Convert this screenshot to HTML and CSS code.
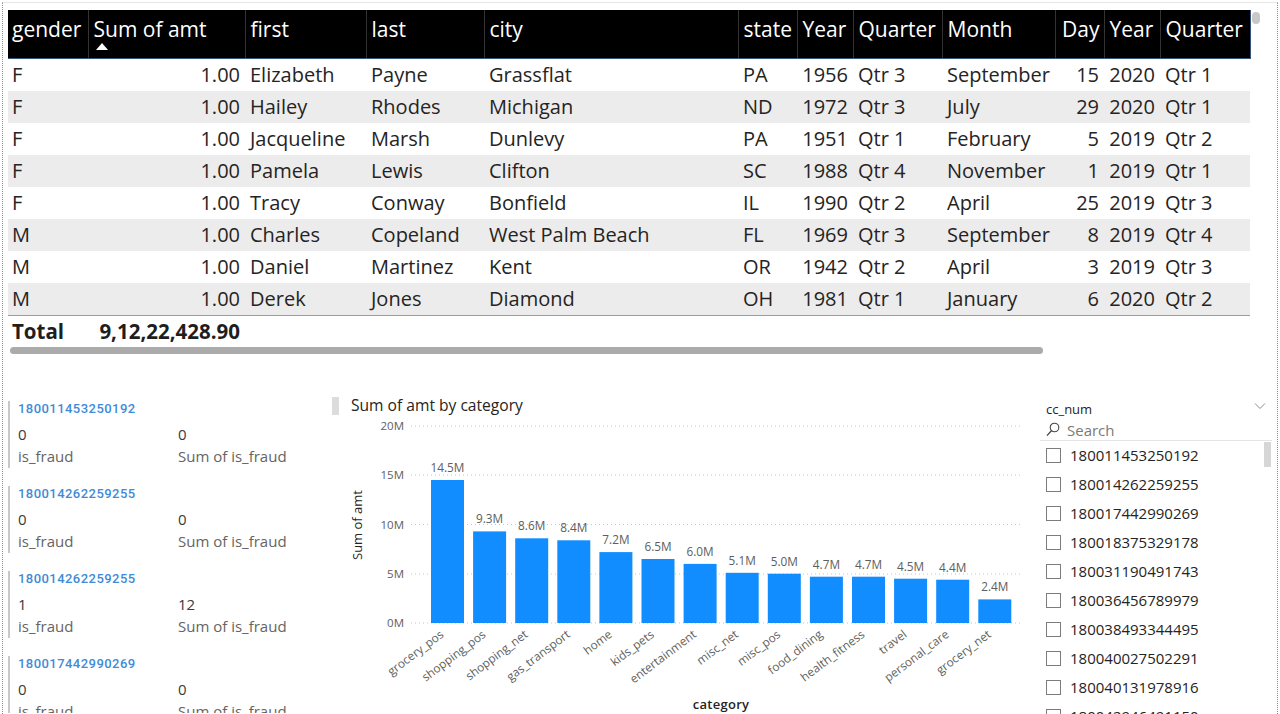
FILE: index.html
```html
<!DOCTYPE html>
<html lang="en">
<head>
<meta charset="utf-8">
<title>Fraud report</title>
<link rel="stylesheet" href="styles.css">
</head>
<body>
<div class="page">
  <section class="table-visual">
    <table class="grid">
      <colgroup>
        <col class="c-gender"><col class="c-sum"><col class="c-first"><col class="c-last"><col class="c-city"><col class="c-state"><col class="c-year"><col class="c-qtr"><col class="c-month"><col class="c-day"><col class="c-year2"><col class="c-qtr2">
      </colgroup>
      <thead>
        <tr>
          <th>gender</th>
          <th class="sorted">Sum of amt<span class="sort-arrow"></span></th>
          <th>first</th>
          <th>last</th>
          <th>city</th>
          <th>state</th>
          <th>Year</th>
          <th>Quarter</th>
          <th>Month</th>
          <th class="num">Day</th>
          <th>Year</th>
          <th>Quarter</th>
        </tr>
      </thead>
      <tbody>
        <tr><td>F</td><td class="num">1.00</td><td>Elizabeth</td><td>Payne</td><td>Grassflat</td><td>PA</td><td class="num">1956</td><td>Qtr 3</td><td>September</td><td class="num">15</td><td class="num">2020</td><td>Qtr 1</td></tr>
        <tr><td>F</td><td class="num">1.00</td><td>Hailey</td><td>Rhodes</td><td>Michigan</td><td>ND</td><td class="num">1972</td><td>Qtr 3</td><td>July</td><td class="num">29</td><td class="num">2020</td><td>Qtr 1</td></tr>
        <tr><td>F</td><td class="num">1.00</td><td>Jacqueline</td><td>Marsh</td><td>Dunlevy</td><td>PA</td><td class="num">1951</td><td>Qtr 1</td><td>February</td><td class="num">5</td><td class="num">2019</td><td>Qtr 2</td></tr>
        <tr><td>F</td><td class="num">1.00</td><td>Pamela</td><td>Lewis</td><td>Clifton</td><td>SC</td><td class="num">1988</td><td>Qtr 4</td><td>November</td><td class="num">1</td><td class="num">2019</td><td>Qtr 1</td></tr>
        <tr><td>F</td><td class="num">1.00</td><td>Tracy</td><td>Conway</td><td>Bonfield</td><td>IL</td><td class="num">1990</td><td>Qtr 2</td><td>April</td><td class="num">25</td><td class="num">2019</td><td>Qtr 3</td></tr>
        <tr><td>M</td><td class="num">1.00</td><td>Charles</td><td>Copeland</td><td>West Palm Beach</td><td>FL</td><td class="num">1969</td><td>Qtr 3</td><td>September</td><td class="num">8</td><td class="num">2019</td><td>Qtr 4</td></tr>
        <tr><td>M</td><td class="num">1.00</td><td>Daniel</td><td>Martinez</td><td>Kent</td><td>OR</td><td class="num">1942</td><td>Qtr 2</td><td>April</td><td class="num">3</td><td class="num">2019</td><td>Qtr 3</td></tr>
        <tr><td>M</td><td class="num">1.00</td><td>Derek</td><td>Jones</td><td>Diamond</td><td>OH</td><td class="num">1981</td><td>Qtr 1</td><td>January</td><td class="num">6</td><td class="num">2020</td><td>Qtr 2</td></tr>
      </tbody>
      <tfoot>
        <tr><td>Total</td><td class="num">9,12,22,428.90</td><td></td><td></td><td></td><td></td><td></td><td></td><td></td><td></td><td></td><td></td></tr>
      </tfoot>
    </table>
    <div class="hscroll"></div>
    <div class="vscroll"></div>
  </section>

  <section class="bottom">
    <div class="cards">
      <div class="card">
        <div class="card-title">180011453250192</div>
        <div class="card-grid"><span class="val">0</span><span class="val">0</span><span class="lbl">is_fraud</span><span class="lbl">Sum of is_fraud</span></div>
      </div>
      <div class="card">
        <div class="card-title">180014262259255</div>
        <div class="card-grid"><span class="val">0</span><span class="val">0</span><span class="lbl">is_fraud</span><span class="lbl">Sum of is_fraud</span></div>
      </div>
      <div class="card">
        <div class="card-title">180014262259255</div>
        <div class="card-grid"><span class="val">1</span><span class="val">12</span><span class="lbl">is_fraud</span><span class="lbl">Sum of is_fraud</span></div>
      </div>
      <div class="card">
        <div class="card-title">180017442990269</div>
        <div class="card-grid"><span class="val">0</span><span class="val">0</span><span class="lbl">is_fraud</span><span class="lbl">Sum of is_fraud</span></div>
      </div>
    </div>

    <div class="chart">
      <svg class="chart-svg" width="700" height="319" viewBox="0 0 700 319">
        <rect x="1" y="4" width="7" height="18" fill="#dcdcdc"/>
        <text x="20" y="18" class="ch-title">Sum of amt by category</text>
        <g class="grid-lines">
          <line x1="80" y1="33" x2="690" y2="33"/>
          <line x1="80" y1="82" x2="690" y2="82"/>
          <line x1="80" y1="131.5" x2="690" y2="131.5"/>
          <line x1="80" y1="181" x2="690" y2="181"/>
          <line x1="80" y1="230" x2="690" y2="230"/>
        </g>
        <g class="y-labels">
          <text x="73" y="37">20M</text>
          <text x="73" y="86">15M</text>
          <text x="73" y="135.5">10M</text>
          <text x="73" y="185">5M</text>
          <text x="73" y="234">0M</text>
        </g>
        <text class="axis-title" transform="translate(31,132) rotate(-90)">Sum of amt</text>
        <g class="bars">
          <rect x="100" y="87" width="33" height="143"/>
          <rect x="142.1" y="138.4" width="33" height="91.6"/>
          <rect x="184.2" y="145.3" width="33" height="84.7"/>
          <rect x="226.3" y="147.3" width="33" height="82.7"/>
          <rect x="268.4" y="159.1" width="33" height="70.9"/>
          <rect x="310.5" y="166" width="33" height="64"/>
          <rect x="352.6" y="170.9" width="33" height="59.1"/>
          <rect x="394.7" y="179.8" width="33" height="50.2"/>
          <rect x="436.8" y="180.7" width="33" height="49.3"/>
          <rect x="478.9" y="183.7" width="33" height="46.3"/>
          <rect x="521" y="183.7" width="33" height="46.3"/>
          <rect x="563.1" y="185.7" width="33" height="44.3"/>
          <rect x="605.2" y="186.7" width="33" height="43.3"/>
          <rect x="647.3" y="206.4" width="33" height="23.6"/>
        </g>
        <g class="data-labels">
          <text x="116.5" y="79">14.5M</text>
          <text x="158.6" y="130">9.3M</text>
          <text x="200.7" y="137">8.6M</text>
          <text x="242.8" y="139">8.4M</text>
          <text x="284.9" y="151">7.2M</text>
          <text x="327" y="158">6.5M</text>
          <text x="369.1" y="163">6.0M</text>
          <text x="411.2" y="172">5.1M</text>
          <text x="453.3" y="173">5.0M</text>
          <text x="495.4" y="176">4.7M</text>
          <text x="537.5" y="176">4.7M</text>
          <text x="579.6" y="178">4.5M</text>
          <text x="621.7" y="179">4.4M</text>
          <text x="663.8" y="198">2.4M</text>
        </g>
        <g class="x-labels">
          <text transform="translate(113.5,243) rotate(-37)">grocery_pos</text>
          <text transform="translate(155.6,243) rotate(-37)">shopping_pos</text>
          <text transform="translate(197.7,243) rotate(-37)">shopping_net</text>
          <text transform="translate(239.8,243) rotate(-37)">gas_transport</text>
          <text transform="translate(281.9,243) rotate(-37)">home</text>
          <text transform="translate(324,243) rotate(-37)">kids_pets</text>
          <text transform="translate(366.1,243) rotate(-37)">entertainment</text>
          <text transform="translate(408.2,243) rotate(-37)">misc_net</text>
          <text transform="translate(450.3,243) rotate(-37)">misc_pos</text>
          <text transform="translate(492.4,243) rotate(-37)">food_dining</text>
          <text transform="translate(534.5,243) rotate(-37)">health_fitness</text>
          <text transform="translate(576.6,243) rotate(-37)">travel</text>
          <text transform="translate(618.7,243) rotate(-37)">personal_care</text>
          <text transform="translate(660.8,243) rotate(-37)">grocery_net</text>
        </g>
        <text class="x-title" x="390" y="316">category</text>
      </svg>
    </div>

    <div class="slicer">
      <div class="slicer-head">
        <span class="slicer-title">cc_num</span>
        <svg class="chev" width="12" height="8" viewBox="0 0 12 8"><path d="M1 1.5 L6 6.5 L11 1.5" fill="none" stroke="#8a8a8a" stroke-width="1"/></svg>
      </div>
      <div class="slicer-search">
        <svg class="search-icon" width="14" height="15" viewBox="0 0 14 15"><circle cx="8.5" cy="5.5" r="4.3" fill="none" stroke="#444" stroke-width="1.1"/><path d="M5.4 8.7 L1 13.6" stroke="#444" stroke-width="1.3"/></svg>
        <span>Search</span>
      </div>
      <div class="slicer-list">
        <ul>
          <li><span class="box"></span>180011453250192</li>
          <li><span class="box"></span>180014262259255</li>
          <li><span class="box"></span>180017442990269</li>
          <li><span class="box"></span>180018375329178</li>
          <li><span class="box"></span>180031190491743</li>
          <li><span class="box"></span>180036456789979</li>
          <li><span class="box"></span>180038493344495</li>
          <li><span class="box"></span>180040027502291</li>
          <li><span class="box"></span>180040131978916</li>
          <li><span class="box"></span>180042946491150</li>
        </ul>
        <div class="list-thumb"></div>
      </div>
    </div>
  </section>
</div>
</body>
</html>
```
FILE: styles.css
```css
* { box-sizing: border-box; }
html, body { margin: 0; padding: 0; background: #fff; }
body {
  font-family: "Open Sans", "Noto Sans", sans-serif;
  color: #252423;
  width: 1280px;
  height: 714px;
  overflow: hidden;
}
.page {
  margin: 2px 2px 0 2px;
  height: 712px;
  border-top: 1px solid #e6e6e6;
  border-left: 1px dotted #8a8a8a;
  border-right: 1px dotted #8a8a8a;
  padding: 7px 0 0 5px;
  overflow: hidden;
}

/* ---------- table visual ---------- */
.table-visual { position: relative; width: 1250px; }
.grid {
  border-collapse: collapse;
  table-layout: fixed;
  width: 1242px;
  font-size: 20px;
}
.c-gender { width: 80px; }
.c-sum { width: 157px; }
.c-first { width: 121px; }
.c-last { width: 118px; }
.c-city { width: 254px; }
.c-state { width: 59px; }
.c-year { width: 56px; }
.c-qtr { width: 89px; }
.c-month { width: 113px; }
.c-day { width: 49px; }
.c-year2 { width: 56px; }
.c-qtr2 { width: 90px; }

.grid th {
  background: #000;
  color: #fff;
  font-weight: 400;
  font-size: 21px;
  text-align: left;
  vertical-align: top;
  height: 48px;
  padding: 5px 2px 0 5px;
  line-height: 28px;
  white-space: nowrap;
  border-right: 1px solid #333;
  border-bottom: 1px solid #34547a;
}
.grid th:first-child { padding-left: 4px; }
.grid th:last-child { border-right: 1px solid #34547a; }
.grid th.num { text-align: right; padding-right: 4px; }
.sort-arrow {
  display: block;
  width: 0; height: 0;
  margin: 0 0 0 2px;
  border-left: 6px solid transparent;
  border-right: 6px solid transparent;
  border-bottom: 7px solid #fff;
}
.grid td {
  height: 32px;
  line-height: 32px;
  padding: 0 5px;
  white-space: nowrap;
  overflow: visible;
}
.grid td:first-child { padding-left: 4px; }
.grid td.num { text-align: right; padding-right: 5px; }
.grid tbody tr:nth-child(even) td { background: #edecec; }
.grid tfoot td {
  font-weight: 700;
  font-size: 20.5px;
  height: 31px;
  line-height: 31px;
  color: #1e1e1e;
  border-top: 1px solid #62aaee;
}
.hscroll {
  margin: 0 0 0 2px;
  width: 1033px;
  height: 7px;
  border-radius: 4px;
  background: #ababab;
}
.vscroll {
  position: absolute;
  left: 1244px;
  top: 2px;
  width: 8px;
  height: 12px;
  border-radius: 4px;
  background: #c8c8c8;
}

/* ---------- bottom ---------- */
.bottom {
  display: flex;
  margin-top: 39px;
  height: 320px;
}
.cards {
  width: 323px;
  padding-top: 8px;
  overflow: hidden;
  display: flex;
  flex-direction: column;
  gap: 18px;
}
.card {
  border-left: 2px solid #c8c8c8;
  padding-left: 8px;
}
.card-title {
  font-family: Roboto, "DejaVu Sans", sans-serif;
  font-weight: 500;
  font-size: 13px;
  letter-spacing: 0.45px;
  line-height: 16px;
  color: #3f8bd8;
  margin-bottom: 6px;
}
.card-grid {
  display: grid;
  grid-template-columns: 160px auto;
  font-size: 15px;
  line-height: 22px;
}
.card-grid .val { color: #3b3a39; }
.card-grid .lbl { color: #66645f; }
.card:not(:last-child) .card-grid { padding-bottom: 1px; }

.chart { width: 709px; }
.chart-svg { display: block; font-family: "Open Sans", "Noto Sans", sans-serif; }
.ch-title { font-size: 15.6px; fill: #252423; }
.grid-lines line { stroke: #c6c6c6; stroke-width: 1; stroke-dasharray: 1 3; }
.y-labels text { font-size: 11.5px; fill: #605e5c; text-anchor: end; }
.axis-title { font-size: 13px; fill: #252423; text-anchor: middle; }
.bars rect { fill: #118dff; }
.data-labels text { font-size: 11.8px; fill: #605e5c; text-anchor: middle; }
.x-labels text { font-size: 11.8px; fill: #605e5c; text-anchor: end; }
.x-title { font-size: 13px; font-weight: 600; fill: #252423; text-anchor: middle; letter-spacing: 0.3px; }

/* ---------- slicer ---------- */
.slicer {
  width: 236px;
  padding-top: 8px;
}
.slicer-head {
  display: flex;
  justify-content: space-between;
  align-items: center;
  padding: 0 10px 0 6px;
  height: 16px;
}
.slicer-title { font-size: 13px; color: #252423; }
.chev { margin-top: -6px; }
.slicer-search {
  display: flex;
  align-items: center;
  gap: 7px;
  height: 24px;
  padding: 3px 0 0 6px;
  border-bottom: 1px solid #e4e4e4;
  font-size: 15px;
  color: #7a7a7a;
  width: 232px;
}
.slicer-list {
  position: relative;
  height: 290px;
  overflow: hidden;
}
.slicer-list ul {
  list-style: none;
  margin: 0;
  padding: 0 0 0 6px;
}
.slicer-list li {
  display: flex;
  align-items: center;
  height: 29px;
  font-size: 15px;
  color: #252423;
}
.box {
  width: 15px;
  height: 15px;
  border: 1px solid #7c7c7c;
  margin-right: 9px;
  flex: none;
}
.list-thumb {
  position: absolute;
  right: 5px;
  top: 1px;
  width: 7px;
  height: 25px;
  background: #d6d6d6;
}
```
